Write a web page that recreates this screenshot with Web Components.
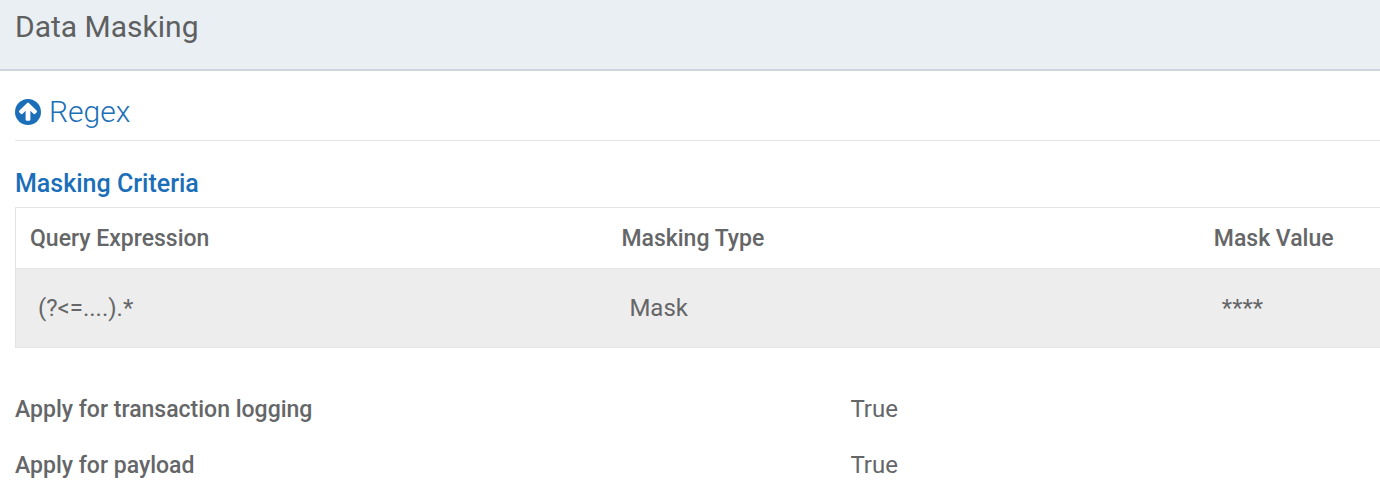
<!DOCTYPE html>
<html lang="en">
<head>
<meta charset="utf-8">
<meta name="viewport" content="width=device-width, initial-scale=1">
<title>Data Masking</title>
<style>
    :root {
        --color-text: #656668;
        --color-heading: #5e5f61;
        --color-accent: #1b6fb8;
        --color-bar: #eaeff3;
        --color-bar-border: #cdd6dc;
        --color-line: #e2e4e6;
        --color-row: #ededed;
        --gutter: 15px;
        --label-size: 23px;
    }

    body {
        margin: 0;
        background: #fff;
        color: var(--color-text);
        font-family: Roboto, "Liberation Sans", sans-serif;
        font-size: 24px;
        line-height: 32px;
    }
</style>
</head>
<body>
<page-header>Data Masking</page-header>
<main>
    <collapse-section label="Regex">
        <criteria-table label="Masking Criteria"></criteria-table>
        <setting-list>
            <setting-row label="Apply for transaction logging">True</setting-row>
            <setting-row label="Apply for payload">True</setting-row>
        </setting-list>
    </collapse-section>
</main>

<script>
class PageHeader extends HTMLElement {
    constructor() {
        super();
        this.attachShadow({ mode: 'open' });
    }

    connectedCallback() {
        this.shadowRoot.innerHTML = `
            <style>
                :host {
                    display: block;
                    padding: 8px var(--gutter) 23px;
                    background: var(--color-bar);
                    border-bottom: 2px solid var(--color-bar-border);
                }

                h1 {
                    margin: 0;
                    color: var(--color-heading);
                    font-size: 30px;
                    font-weight: 400;
                    line-height: 38px;
                }
            </style>
            <h1><slot></slot></h1>
        `;
    }
}

class CollapseSection extends HTMLElement {
    constructor() {
        super();
        this.attachShadow({ mode: 'open' });
    }

    connectedCallback() {
        this.shadowRoot.innerHTML = `
            <style>
                :host {
                    display: block;
                    padding: 22px 0 0 var(--gutter);
                }

                h2 {
                    margin: 0;
                    padding-bottom: 9px;
                    border-bottom: 1px solid var(--color-line);
                }

                button {
                    display: flex;
                    align-items: center;
                    gap: 8px;
                    padding: 0;
                    border: 0;
                    background: none;
                    color: var(--color-accent);
                    font: 300 30px/38px Roboto, "Liberation Sans", sans-serif;
                    cursor: pointer;
                }

                svg {
                    width: 26px;
                    height: 26px;
                }

                button[aria-expanded="false"] svg {
                    transform: rotate(180deg);
                }

                .content {
                    padding-top: 27px;
                }
            </style>
            <h2>
                <button type="button" aria-expanded="true" aria-controls="content">
                    <svg viewBox="0 0 26 26" aria-hidden="true">
                        <circle cx="13" cy="13" r="13" fill="currentColor"/>
                        <path d="M12.1 3.9a1.3 1.3 0 0 1 1.8 0l7.7 7.7a1.3 1.3 0 0 1 0 1.8l-1.4 1.4a1.3 1.3 0 0 1-1.8 0l-3-3v8.7a1.3 1.3 0 0 1-1.3 1.3h-2.2a1.3 1.3 0 0 1-1.3-1.3v-8.7l-3 3a1.3 1.3 0 0 1-1.8 0l-1.4-1.4a1.3 1.3 0 0 1 0-1.8Z" fill="#fff"/>
                    </svg>
                    <span></span>
                </button>
            </h2>
            <div class="content" id="content"><slot></slot></div>
        `;
        this.shadowRoot.querySelector('span').textContent = this.getAttribute('label');

        const button = this.shadowRoot.querySelector('button');
        const content = this.shadowRoot.querySelector('.content');
        button.addEventListener('click', () => {
            content.hidden = !content.hidden;
            button.setAttribute('aria-expanded', String(!content.hidden));
        });
    }
}

class CriteriaTable extends HTMLElement {
    constructor() {
        super();
        this.attachShadow({ mode: 'open' });
    }

    connectedCallback() {
        this.shadowRoot.innerHTML = `
            <style>
                :host {
                    display: block;
                }

                table {
                    width: 100%;
                    table-layout: fixed;
                    border-collapse: separate;
                    border-spacing: 0;
                }

                caption {
                    padding-bottom: 7px;
                    color: var(--color-accent);
                    font-size: 25px;
                    font-weight: 500;
                    text-align: left;
                }

                col.wide {
                    width: 43.4%;
                }

                th, td {
                    border-top: 1px solid var(--color-line);
                    text-align: left;
                    white-space: nowrap;
                }

                th {
                    padding: 15px 14px 13px;
                    font-size: var(--label-size);
                    font-weight: 500;
                }

                td {
                    padding: 23px 22px;
                    border-bottom: 1px solid var(--color-line);
                    background: var(--color-row);
                }

                th:first-child, td:first-child {
                    border-left: 1px solid var(--color-line);
                }
            </style>
            <table>
                <caption></caption>
                <colgroup><col class="wide"><col class="wide"><col></colgroup>
                <thead>
                    <tr>
                        <th scope="col">Query Expression</th>
                        <th scope="col">Masking Type</th>
                        <th scope="col">Mask Value</th>
                    </tr>
                </thead>
                <tbody>
                    <tr>
                        <td>(?&lt;=....).*</td>
                        <td>Mask</td>
                        <td>****</td>
                    </tr>
                </tbody>
            </table>
        `;
        this.shadowRoot.querySelector('caption').textContent = this.getAttribute('label');
    }
}

class SettingList extends HTMLElement {
    constructor() {
        super();
        this.attachShadow({ mode: 'open' });
    }

    connectedCallback() {
        this.shadowRoot.innerHTML = `
            <style>
                :host {
                    display: flex;
                    flex-direction: column;
                    gap: 24px;
                    padding-top: 45px;
                }
            </style>
            <slot></slot>
        `;
    }
}

class SettingRow extends HTMLElement {
    constructor() {
        super();
        this.attachShadow({ mode: 'open' });
    }

    connectedCallback() {
        this.shadowRoot.innerHTML = `
            <style>
                :host {
                    display: block;
                }

                dl {
                    display: grid;
                    grid-template-columns: 61.2% 1fr;
                    align-items: baseline;
                    height: 32px;
                    margin: 0;
                }

                dt {
                    font-size: var(--label-size);
                    font-weight: 500;
                }

                dd {
                    margin: 0;
                }
            </style>
            <dl>
                <dt></dt>
                <dd><slot></slot></dd>
            </dl>
        `;
        this.shadowRoot.querySelector('dt').textContent = this.getAttribute('label');
    }
}

customElements.define('page-header', PageHeader);
customElements.define('collapse-section', CollapseSection);
customElements.define('criteria-table', CriteriaTable);
customElements.define('setting-list', SettingList);
customElements.define('setting-row', SettingRow);
</script>
</body>
</html>
